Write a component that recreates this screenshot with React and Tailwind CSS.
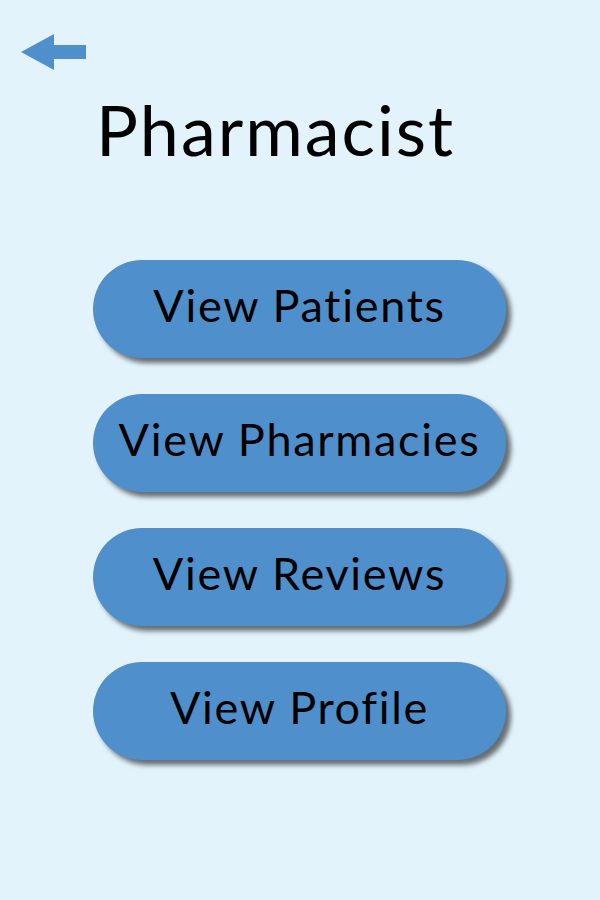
import React from 'react';

const items = ['View Patients', 'View Pharmacies', 'View Reviews', 'View Profile'];

const App = () => {
  return (
    <div className="w-[600px] h-[900px] bg-[#e2f3fc] font-['Lato',sans-serif] text-black">
      <div className="pt-[34px] pl-[21px]">
        <svg width="66" height="36" viewBox="0 0 66 36">
          <polygon points="0,18 33,0 33,11 65,11 65,25 33,25 33,36" fill="#4f8fcc" />
        </svg>
      </div>
      <h1 className="mt-[19px] ml-[96px] text-[70px] leading-[80px] tracking-[2px] font-normal">Pharmacist</h1>
      <div className="mt-[91px] flex flex-col gap-[36px] pl-[93px]">
        {items.map((t) => (
          <button
            key={t}
            className="w-[413px] h-[98px] pb-[6px] rounded-full bg-[#4f8fcc] text-[45px] tracking-[1.7px] shadow-[5px_5px_5px_rgba(0,0,0,0.55)] flex items-center justify-center"
          >
            {t}
          </button>
        ))}
      </div>
    </div>
  );
};

export default App;
